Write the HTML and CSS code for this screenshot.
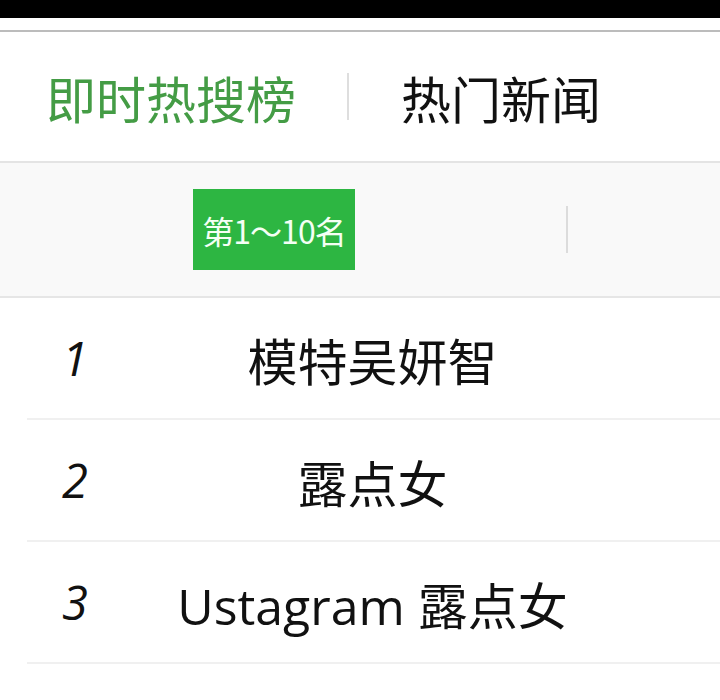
FILE: index.html
```html
<!DOCTYPE html>
<html lang="zh-CN">
<head>
    <meta charset="UTF-8">
    <meta name="viewport" content="width=device-width, initial-scale=1.0">
    <title>即时热搜榜</title>
    <link rel="stylesheet" href="styles.css">
</head>
<body>
    <div class="status-bar"></div>

    <div class="tabs">
        <span class="tab active">即时热搜榜</span>
        <span class="tab-divider"></span>
        <span class="tab">热门新闻</span>
    </div>

    <div class="filter-bar">
        <span class="range active">第1～10名</span>
        <span class="filter-divider"></span>
    </div>

    <ul class="rank-list">
        <li class="rank-row">
            <span class="rank-no">1</span>
            <span class="rank-title">模特吴妍智</span>
        </li>
        <li class="rank-row">
            <span class="rank-no">2</span>
            <span class="rank-title">露点女</span>
        </li>
        <li class="rank-row">
            <span class="rank-no">3</span>
            <span class="rank-title">Ustagram 露点女</span>
        </li>
        <li class="rank-row">
            <span class="rank-no">4</span>
            <span class="rank-title">吴妍智模特</span>
        </li>
    </ul>
</body>
</html>
```

FILE: styles.css
```css
body {
    margin: 0;
    padding: 0;
    background-color: #fff;
    font-family: "Open Sans", "Noto Sans CJK SC", sans-serif;
    color: #111;
    overflow: hidden;
}

.status-bar {
    height: 18px;
    background-color: #000;
    border-bottom: 12px solid #fff;
}

.tabs {
    display: flex;
    align-items: center;
    height: 129px;
    padding-left: 46px;
    border-top: 2px solid #bcbcbc;
    border-bottom: 2px solid #e4e4e4;
    font-family: "Noto Sans CJK SC", sans-serif;
    font-size: 50px;
}

.tab {
    line-height: 1;
    color: #111;
}

.tab.active {
    color: #449c45;
}

.tab-divider {
    width: 2px;
    height: 47px;
    margin: 0 52px 0 51px;
    background-color: #dedede;
}

.filter-bar {
    display: flex;
    align-items: center;
    height: 133px;
    padding-left: 193px;
    background-color: #f9f9f9;
    border-bottom: 2px solid #e6e6e6;
}

.range {
    display: flex;
    align-items: center;
    justify-content: center;
    width: 162px;
    height: 81px;
    font-family: "Noto Sans CJK SC", sans-serif;
    font-size: 32px;
    letter-spacing: -1px;
    color: #f4fff4;
}

.range.active {
    background-color: #2db642;
}

.filter-divider {
    width: 2px;
    height: 47px;
    margin-left: 211px;
    background-color: #dcdcdc;
}

.rank-list {
    list-style: none;
    margin: 0;
    padding: 0;
}

.rank-row {
    display: flex;
    align-items: center;
    height: 120px;
    margin-left: 27px;
    border-bottom: 2px solid #f0f0f0;
}

.rank-no {
    width: 120px;
    padding-left: 35px;
    box-sizing: border-box;
    font-style: italic;
    font-size: 47px;
    line-height: 1;
}

.rank-title {
    flex: 1;
    padding-right: 122px;
    text-align: center;
    font-size: 50px;
    line-height: 1;
    padding-top: 8px;
}
```
